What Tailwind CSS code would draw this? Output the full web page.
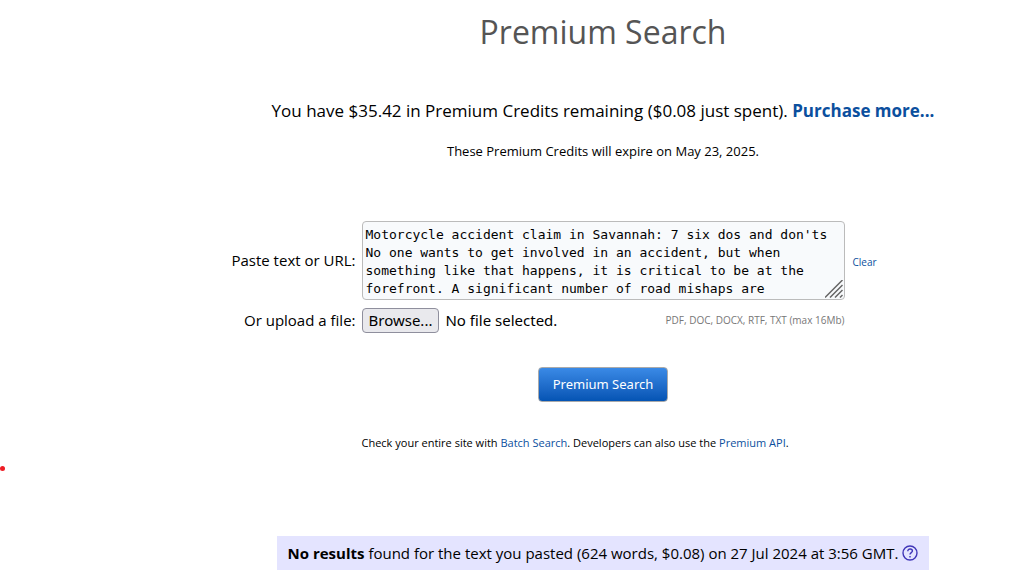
<!DOCTYPE html>
<html lang="en">
<head>
<meta charset="utf-8">
<meta name="viewport" content="width=device-width, initial-scale=1">
<title>Premium Search</title>
<script src="https://cdn.jsdelivr.net/npm/@tailwindcss/browser@4"></script>
</head>
<body class="relative bg-white font-['Open_Sans','Noto_Sans',sans-serif] text-[15px] text-black">
<span class="absolute top-[466px] left-0 size-[5px] rounded-full bg-[#ee1c24]" aria-hidden="true"></span>
<main class="flex flex-col items-center pt-2 pl-48">
  <h1 class="text-[32px] leading-12 text-[#555]">Premium Search</h1>
  <p class="mt-[43px] text-[17px] leading-6">You have $35.42 in Premium Credits remaining ($0.08 just spent). <a href="#purchase" class="font-bold text-[#0b4f9e]">Purchase more...</a></p>
  <p class="mt-[18px] text-[13px] leading-5">These Premium Credits will expire on May 23, 2025.</p>

  <form class="mt-[60px] flex w-full flex-col items-center">
    <div class="grid grid-cols-[128px_483px_128px] items-center gap-x-1.5 gap-y-2">
      <label for="source" class="text-right whitespace-nowrap">Paste text or URL:</label>
      <div class="relative h-[79px]">
        <textarea id="source" class="block h-full w-full resize-none overflow-hidden rounded border border-[#bbb] bg-[#f8fafc] px-[3px] pt-1 font-['DejaVu_Sans_Mono',monospace] text-[13px] leading-[18px]">Motorcycle accident claim in Savannah: 7 six dos and don'ts
No one wants to get involved in an accident, but when something like that happens, it is critical to be at the forefront. A significant number of road mishaps are</textarea>
        <svg class="pointer-events-none absolute right-0.5 bottom-0.5 size-[18px]" viewBox="0 0 18 18" fill="none" stroke="#666" stroke-width="1.5" aria-hidden="true"><path d="M0 17.5 17.5 0M5 17.5 17.5 5M10 17.5 17.5 10M15 17.5 17.5 15"/></svg>
      </div>
      <a href="#clear" class="pt-1 pl-0.5 text-[10px] text-[#0b4f9e]">Clear</a>

      <span class="text-right whitespace-nowrap">Or upload a file:</span>
      <div class="flex items-center">
        <input id="upload" type="file" class="peer sr-only">
        <label for="upload" class="flex h-[25px] items-center rounded border border-[#8f8f9d] bg-[#e9e9ed] px-1.5 font-['Noto_Sans',sans-serif] text-[15px]">Browse...</label>
        <span class="ml-1.5 font-['Noto_Sans',sans-serif] text-[15px]">No file selected.</span>
        <span class="ml-auto text-[10px] text-[#777]">PDF, DOC, DOCX, RTF, TXT (max 16Mb)</span>
      </div>
    </div>
    <button type="submit" class="mt-[34px] h-[35px] rounded border border-[#aaa] bg-linear-to-b from-[#3a8ae6] to-[#0454b4] px-3.5 font-['Noto_Sans',sans-serif] text-[13px] text-white">Premium Search</button>
  </form>

  <div class="mt-[31px] w-[483px] text-[11px] leading-5">Check your entire site with <a href="#batch" class="text-[#0b4f9e]">Batch Search</a>. Developers can also use the <a href="#api" class="text-[#0b4f9e]">Premium API</a>.</div>

  <div class="mt-[83px] flex h-[34px] items-center gap-1 bg-[#e4e4ff] px-[11px]">
    <p><strong>No results</strong> found for the text you pasted (624 words, $0.08) on 27 Jul 2024 at 3:56 GMT.</p>
    <a href="#help" aria-label="Help"><svg class="size-4" viewBox="0 0 16 16" fill="none" stroke="#4036b8" stroke-width="1.4" aria-hidden="true"><circle cx="8" cy="8" r="7"/><path d="M5.8 6.2c0-3 4.6-2.7 4.6-.2C10.400 7.600 8 7.700 8 9.600M8 10.900v1.500"/></svg></a>
  </div>
</main>
</body>
</html>
